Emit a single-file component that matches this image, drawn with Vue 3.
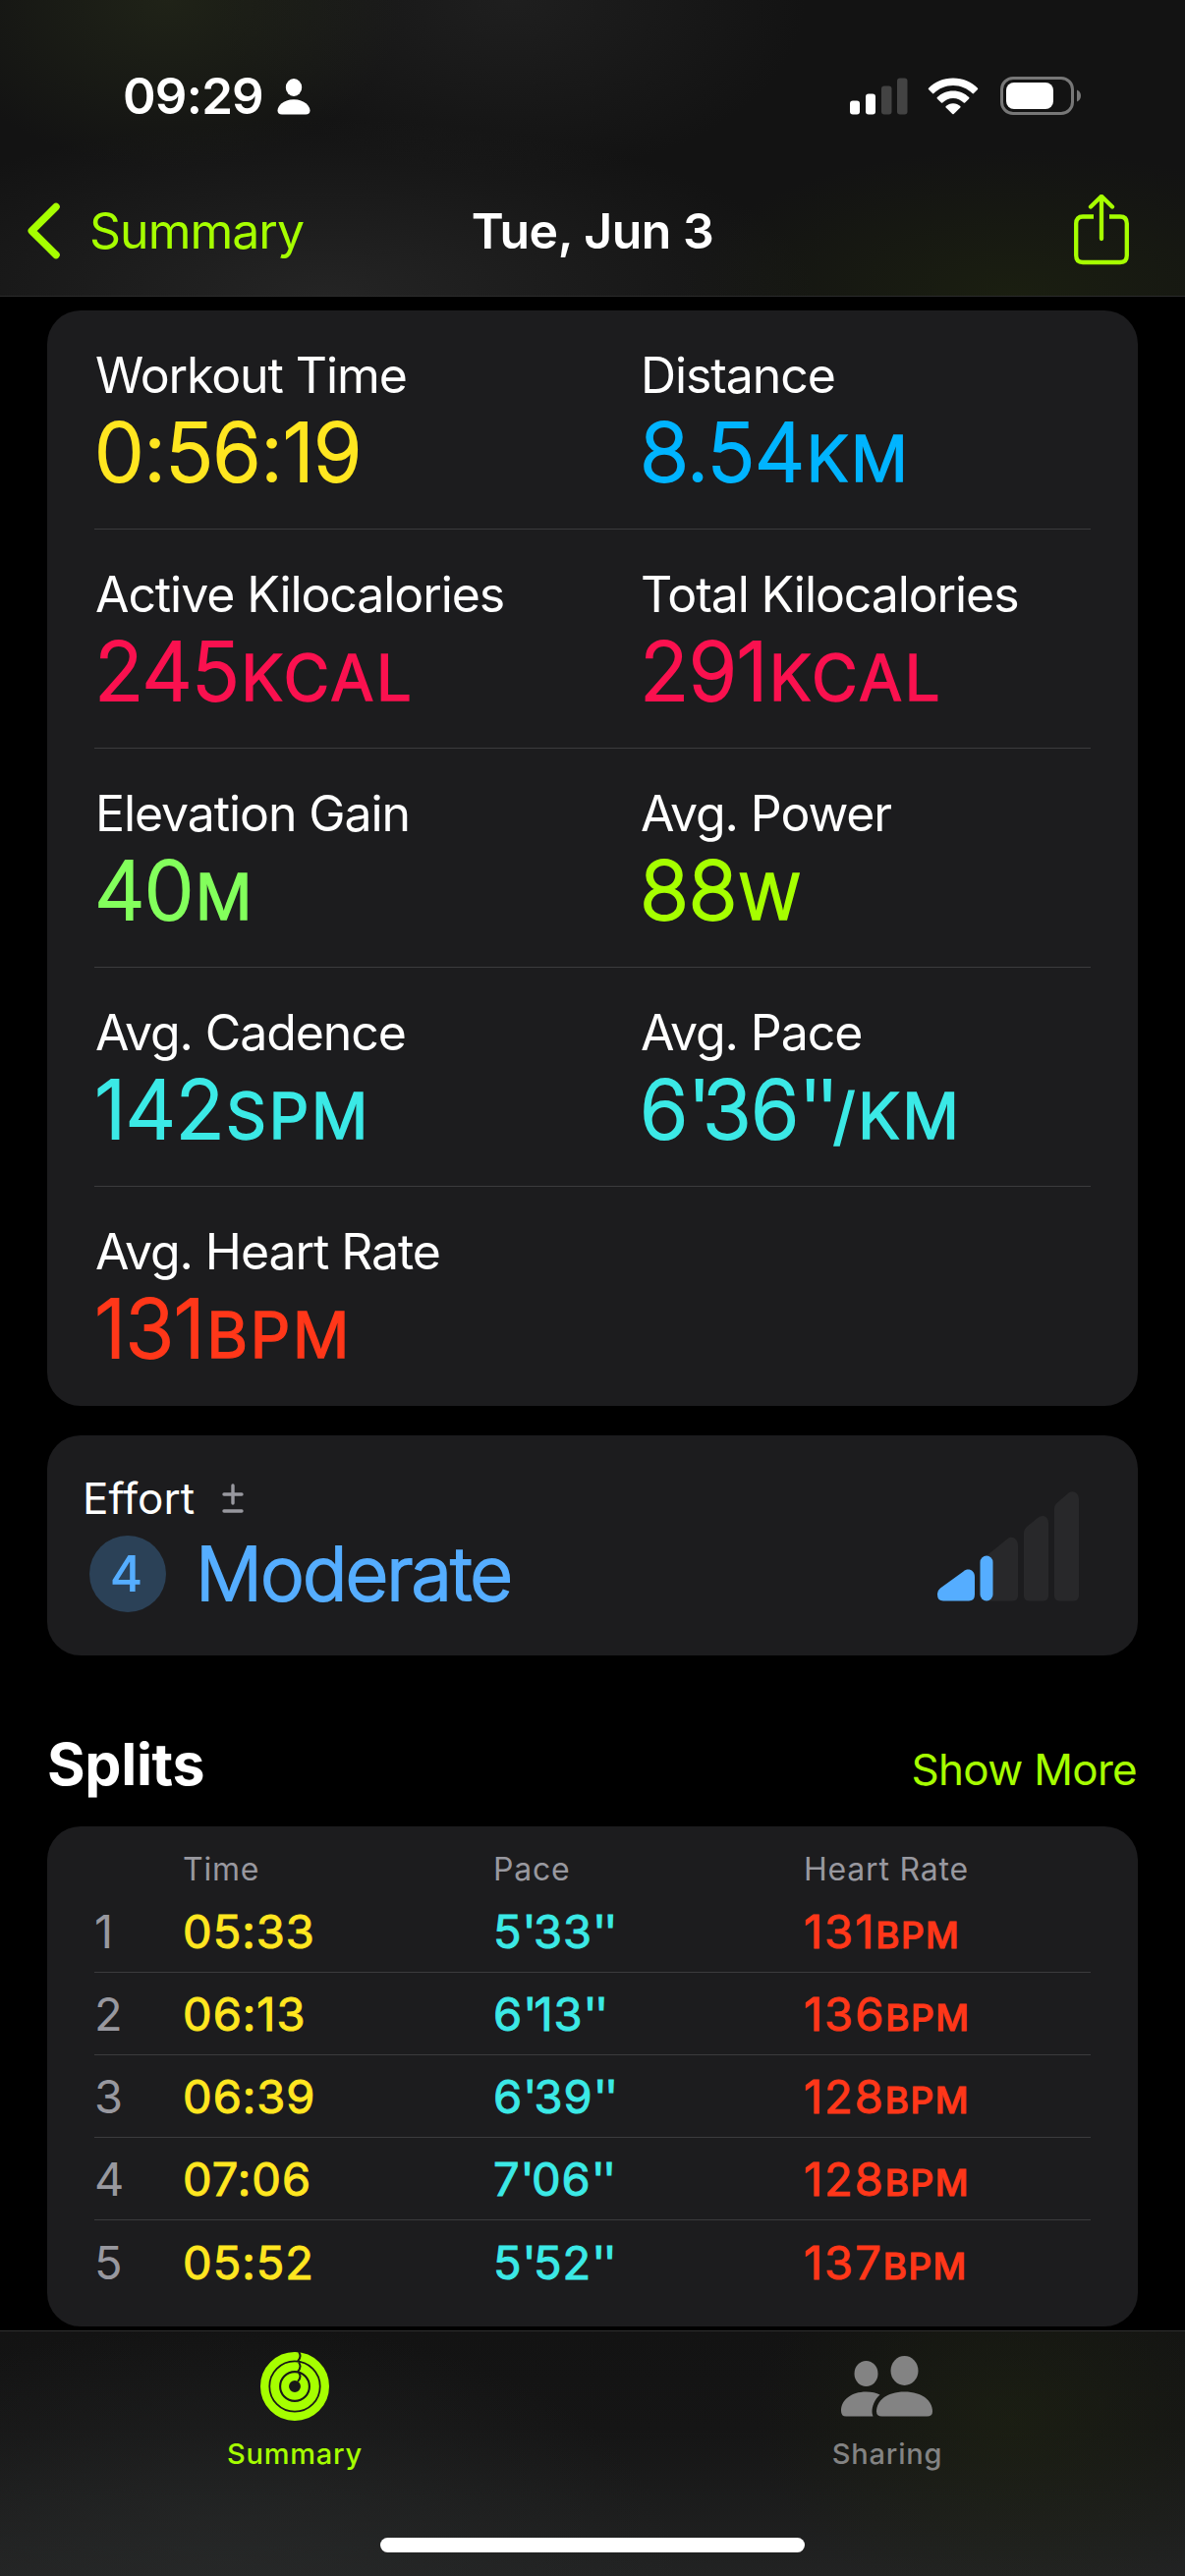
<script setup>
const metrics = [
  [
    { label: 'Workout Time', value: '0:56:19', unit: '', tone: 'yellow' },
    { label: 'Distance', value: '8.54', unit: 'KM', tone: 'blue' },
  ],
  [
    { label: 'Active Kilocalories', value: '245', unit: 'KCAL', tone: 'pink' },
    { label: 'Total Kilocalories', value: '291', unit: 'KCAL', tone: 'pink' },
  ],
  [
    { label: 'Elevation Gain', value: '40', unit: 'M', tone: 'green' },
    { label: 'Avg. Power', value: '88', unit: 'W', tone: 'lime' },
  ],
  [
    { label: 'Avg. Cadence', value: '142', unit: 'SPM', tone: 'cyan' },
    { label: 'Avg. Pace', value: "6'36''", unit: '/KM', tone: 'cyan' },
  ],
  [{ label: 'Avg. Heart Rate', value: '131', unit: 'BPM', tone: 'red' }],
]

const splits = [
  { time: '05:33', pace: "5'33''", bpm: 131 },
  { time: '06:13', pace: "6'13''", bpm: 136 },
  { time: '06:39', pace: "6'39''", bpm: 128 },
  { time: '07:06', pace: "7'06''", bpm: 128 },
  { time: '05:52', pace: "5'52''", bpm: 137 },
]

// Minute and second marks are set tighter than the digits around them.
const parts = (text) => text.split(/('+)/).filter(Boolean)
</script>

<template>
  <div class="screen">
    <header class="top">
      <div class="status">
        <span class="clock">09:29</span>
        <svg class="person" width="34" height="37" viewBox="0 0 34 37" fill="#fff">
          <ellipse cx="17" cy="9" rx="8.2" ry="9" />
          <path d="M5 36.500C2 36.500.5 35 .5 32.500C.5 28 6 21.200 17 21.200S33.500 28 33.500 32.500C33.500 35 32 36.500 29 36.500Z" />
        </svg>
        <span class="grow"></span>
        <svg class="signal" width="59" height="38" viewBox="0 0 59 38">
          <rect x="0" y="23.500" width="10" height="14" rx="3" fill="#fff" />
          <rect x="16" y="16.500" width="10" height="21" rx="3" fill="#fff" />
          <rect x="32" y="8.500" width="10.500" height="29" rx="3" fill="#434343" />
          <rect x="48" y="0.500" width="10.500" height="37" rx="3" fill="#434343" />
        </svg>
        <svg class="wifi" width="52" height="38" viewBox="0 0 52 38" fill="#fff">
          <path d="M26 .5C36 .5 45 4.500 51 10.700Q51.600 11.400 51 12.100L47 16.100Q46.300 16.700 45.600 16C40.500 11 33.600 8 26 8S11.500 11 6.400 16Q5.700 16.700 5 16.100L1 12.100Q.4 11.400 1 10.700C7 4.500 16 .5 26 .5Z" />
          <path d="M26 13.400C32.500 13.400 38 15.900 42.200 20Q42.800 20.700 42.200 21.400L38.100 25.500Q37.400 26.100 36.700 25.500C33.900 22.800 30.200 21 26 21S18.100 22.800 15.300 25.500Q14.600 26.100 13.900 25.500L9.800 21.400Q9.200 20.700 9.800 20C14 15.900 19.500 13.400 26 13.400Z" />
          <path d="M26 26.200C28.900 26.200 31.400 27.300 33.300 29.100Q33.900 29.800 33.300 30.500L26.700 37Q26 37.600 25.300 37L18.700 30.500Q18.100 29.800 18.700 29.100C20.600 27.300 23.100 26.200 26 26.200Z" />
        </svg>
        <svg class="battery" width="82" height="39" viewBox="0 0 82 39">
          <rect x="1.500" y="1.500" width="72" height="36" rx="11.500" fill="none" stroke="#777" stroke-width="3" />
          <rect x="6" y="6" width="48" height="27" rx="8" fill="#fff" />
          <path d="M78 13.500C80.500 14.500 82 16.800 82 19.500S80.500 24.500 78 25.500Z" fill="#777" />
        </svg>
      </div>
      <nav class="nav">
        <a class="back">
          <svg width="34" height="58" viewBox="0 0 34 58" fill="none" stroke="#a6ff00" stroke-width="7.500" stroke-linecap="round" stroke-linejoin="round">
            <path d="M29 4.500L4.300 29L29 53.500" />
          </svg>
          <span>Summary</span>
        </a>
        <h1 class="title">Tue, Jun 3</h1>
        <svg class="share" width="58" height="72" viewBox="0 0 58 72" fill="none" stroke="#a6ff00" stroke-width="4.300">
          <path d="M21 22.500H10Q3.200 22.500 3.200 29.500V62Q3.200 69 10 69H48Q54.800 69 54.800 62V29.500Q54.800 22.500 48 22.500H37" />
          <path d="M29 45V2.500M18 12.500L29 1.800L40 12.500" stroke-linecap="round" stroke-linejoin="round" />
        </svg>
      </nav>
    </header>

    <main class="content">
      <section class="card metrics">
        <div v-for="(row, i) in metrics" :key="i" class="metric-row">
          <div v-for="m in row" :key="m.label" class="metric">
            <div class="label">{{ m.label }}</div>
            <div class="value rounded" :class="m.tone"><span v-for="(p, k) in parts(m.value)" :key="k" :class="{ mark: p[0] === '\'' }">{{ p }}</span><span v-if="m.unit" class="unit">{{ m.unit }}</span></div>
          </div>
        </div>
      </section>

      <section class="card effort">
        <div class="effort-info">
          <div class="effort-head">
            <span>Effort</span>
            <svg width="22" height="31" viewBox="0 0 22 31" fill="none" stroke="#98989f" stroke-width="3.400" stroke-linecap="round">
              <path d="M2 11H20M11 2V20M2 28H20" />
            </svg>
          </div>
          <div class="effort-level">
            <span class="badge">4</span>
            <span class="level rounded">Moderate</span>
          </div>
        </div>
        <svg class="bars" width="144" height="112" viewBox="0 0 144 112">
          <path fill="#28282a" d="M119 18Q119 14 122 11.500L132.500 2.500C137 -2 144 1 144 8V106Q144 111.500 138 111.500H125Q119 111.500 119 106Z" />
          <path fill="#28282a" d="M88 43Q88 38.500 91 36L101.500 27.500C106 22.500 113 25 113 32V106Q113 111.500 107 111.500H94Q88 111.500 88 106Z" />
          <path fill="#28282a" d="M48 67L71 48.500C75.500 44.500 82 48 82 55V106Q82 111.500 76 111.500H50Z" />
          <path fill="#55adff" d="M0 104Q0 101 3 98.500L26.500 81.500C31 77.500 38 80 38 87V105Q38 111.500 32 111.500H6Q0 111.500 0 105Z" />
          <rect x="43.500" y="65.500" width="13" height="46" rx="6.500" fill="#55adff" />
        </svg>
      </section>

      <div class="section-head">
        <h2>Splits</h2>
        <a>Show More</a>
      </div>

      <section class="card splits">
        <div class="split head">
          <span></span><span>Time</span><span>Pace</span><span>Heart Rate</span>
        </div>
        <div v-for="(s, i) in splits" :key="i" class="split row">
          <span class="index">{{ i + 1 }}</span>
          <span class="figure yellow">{{ s.time }}</span>
          <span class="figure cyan"><span v-for="(p, k) in parts(s.pace)" :key="k" :class="{ mark: p[0] === '\'' }">{{ p }}</span></span>
          <span class="figure red">{{ s.bpm }}<span class="unit">BPM</span></span>
        </div>
      </section>
    </main>

    <footer class="tabbar">
      <div class="tabs">
        <a class="tab active">
          <svg width="70" height="70" viewBox="0 0 70 70" fill="none">
            <circle cx="35" cy="35" r="30.800" stroke="#a6ff00" stroke-width="8.400" />
            <circle cx="35" cy="35" r="20.400" stroke="#a6ff00" stroke-width="8.900" />
            <circle cx="35" cy="35" r="9.900" stroke="#a6ff00" stroke-width="7.900" />
            <path stroke="#1a1b1a" stroke-width="2" d="M39 0Q42.500 4.500 38 9.500M39 10.500Q42.500 15 38 20M39 21Q42.500 25 38 30" />
          </svg>
          <span>Summary</span>
        </a>
        <a class="tab">
          <svg width="94" height="70" viewBox="0 0 94 70" fill="#838383">
            <ellipse cx="25.500" cy="22" rx="12" ry="13" />
            <ellipse cx="64.500" cy="19" rx="14" ry="15" />
            <path d="M0 60C0 49 10 40.500 25.500 40.500Q34 40.500 39.500 43.500C34 48.500 31.500 55 31.500 61Q31.500 63.500 32.500 65.500H5Q0 65.500 0 60Z" />
            <path d="M36 60.500C36 50 46 40.500 64.500 40.500S93 50 93 60.500Q93 65.500 87.500 65.500H41.500Q36 65.500 36 60.500Z" />
          </svg>
          <span>Sharing</span>
        </a>
      </div>
      <div class="home-indicator"></div>
    </footer>
  </div>
</template>

<style>
html,
body {
  margin: 0;
  background: #000;
}
</style>

<style scoped>
.screen {
  width: 1206px;
  height: 2622px;
  display: flex;
  flex-direction: column;
  overflow: hidden;
  background: #000;
  color: #fff;
  font-family: Inter, "Liberation Sans", sans-serif;
}
.top {
  box-sizing: border-box;
  height: 302px;
  flex: none;
  border-bottom: 1px solid #2b2b2b;
  background:
    radial-gradient(ellipse 240px 170px at 170px 0, rgba(50, 58, 30, 0.4), transparent),
    radial-gradient(ellipse 340px 150px at 1030px 302px, rgba(34, 42, 14, 0.5), transparent),
    radial-gradient(ellipse 500px 180px at 330px 302px, rgba(48, 48, 48, 0.6), transparent),
    radial-gradient(ellipse 300px 180px at 520px 0, rgba(42, 42, 42, 0.5), transparent),
    #131313;
}
.status {
  display: flex;
  height: 158px;
  box-sizing: border-box;
  padding: 79px 106px 0 125px;
  align-items: flex-start;
}
.clock {
  font-size: 51px;
  font-weight: 600;
  line-height: 38px;
  letter-spacing: -0.8px;
}
.person {
  margin: 1px 0 0 14px;
}
.grow {
  flex: 1;
}
.wifi {
  margin-left: 20px;
}
.battery {
  margin-left: 22px;
  margin-top: -1px;
}
.nav {
  display: grid;
  grid-template-columns: minmax(0, 1fr) auto minmax(0, 1fr);
  align-items: center;
  height: 143px;
  padding: 0 28px;
  box-sizing: border-box;
  margin-top: -1px;
}
.back {
  display: flex;
  align-items: center;
  gap: 29px;
  color: #a6ff00;
  font-size: 50px;
  line-height: 58px;
  letter-spacing: -1px;
  padding-top: 13px;
}
.title {
  margin: 13px 0 0;
  font-size: 50px;
  line-height: 58px;
  font-weight: 600;
  letter-spacing: -0.5px;
}
.share {
  justify-self: end;
  margin: 11px 28px 0 0;
}
.content {
  flex: none;
  height: 2070px;
  box-sizing: border-box;
  padding: 14px 48px 0;
}
.card {
  background: #1c1c1e;
  border-radius: 34px;
  box-sizing: border-box;
}
.metrics {
  height: 1115px;
  padding: 0 48px;
}
.metric-row {
  display: grid;
  grid-template-columns: 555px 1fr;
  height: 223px;
  box-sizing: border-box;
  border-bottom: 1px solid #3b3b3d;
  padding-top: 36px;
}
.metric-row:last-child {
  border-bottom: 0;
}
.label {
  font-size: 50px;
  line-height: 60px;
  letter-spacing: -1.1px;
  padding-left: 1px;
}
.value {
  margin-top: 4px;
  font-size: 82px;
  line-height: 90px;
  letter-spacing: -0.7px;
}
.value .unit {
  margin-left: 2px;
  font-size: 64px;
  font-weight: 400;
  -webkit-text-stroke-width: 1.4px;
  letter-spacing: 2.4px;
}
.value .mark {
  letter-spacing: -6.500px;
  margin-right: -2px;
}
.value .mark:first-of-type {
  margin-right: 0;
}
.rounded {
  font-weight: 300;
  -webkit-text-stroke: 2px currentColor;
  stroke-linejoin: round;
  paint-order: stroke fill;
}
.yellow { color: #ffe620; }
.blue { color: #00b4ff; }
.pink { color: #fa114f; }
.green { color: #83ff5c; }
.lime { color: #a6ff00; }
.cyan { color: #3be9e6; }
.red { color: #ff3719; }
.effort {
  display: flex;
  justify-content: space-between;
  height: 224px;
  margin-top: 30px;
  padding: 37px 60px 0 36px;
}
.effort-head {
  display: flex;
  align-items: center;
  gap: 28px;
  font-size: 44px;
  line-height: 54px;
}
.effort-level {
  display: flex;
  align-items: center;
  margin: 11px 0 0 7px;
}
.badge {
  width: 78px;
  height: 78px;
  border-radius: 50%;
  background: #2b4157;
  color: #55adff;
  font-size: 51px;
  font-weight: 500;
  line-height: 78px;
  text-align: center;
  text-indent: -3px;
}
.level {
  margin-left: 30px;
  font-size: 75.500px;
  line-height: 78px;
  letter-spacing: -1.9px;
  color: #55adff;
}
.bars {
  margin-top: 20px;
}
.section-head {
  display: flex;
  justify-content: space-between;
  align-items: baseline;
  height: 174px;
  box-sizing: border-box;
  padding: 75px 1px 0 0;
}
.section-head h2 {
  margin: 0;
  font-size: 59px;
  line-height: 72px;
  font-weight: 700;
  letter-spacing: -0.3px;
}
.section-head a {
  font-size: 44px;
  letter-spacing: -0.7px;
  color: #a6ff00;
}
.splits {
  height: 509px;
  padding: 24px 48px 0;
}
.split {
  display: grid;
  grid-template-columns: 90px 316px 316px 1fr;
  align-items: center;
}
.split.head {
  height: 41px;
  box-sizing: border-box;
  padding-bottom: 2px;
  color: #98989f;
  font-size: 32px;
  letter-spacing: 0.8px;
}
.split.row {
  height: 84px;
  box-sizing: border-box;
  border-bottom: 1px solid #3b3b3d;
  font-size: 47px;
}
.split.row:last-child {
  border-bottom: 0;
}
.split .index {
  color: #98989f;
}
.split .figure {
  letter-spacing: 1px;
  -webkit-text-stroke: 1px currentColor;
}
.split .figure.red {
  letter-spacing: 2px;
}
.split .mark {
  letter-spacing: -2.8px;
}
.split .unit {
  font-size: 37px;
  font-weight: 500;
  letter-spacing: 1.4px;
}
.tabbar {
  flex: none;
  height: 250px;
  box-sizing: border-box;
  border-top: 1px solid #2f2f2f;
  display: flex;
  flex-direction: column;
  align-items: center;
  background:
    radial-gradient(ellipse 260px 200px at 1030px 90px, rgba(32, 38, 16, 0.5), transparent),
    radial-gradient(ellipse 460px 260px at 230px 250px, rgba(40, 42, 42, 0.7), transparent),
    linear-gradient(#131313, #151515 40%, #222323);
}
.tabs {
  display: grid;
  grid-template-columns: 600px 606px;
  width: 1206px;
  height: 210px;
}
.tab {
  display: flex;
  flex-direction: column;
  align-items: center;
  padding-top: 21px;
  color: #838383;
  font-size: 29px;
  font-weight: 500;
  letter-spacing: 0.8px;
}
.tab span {
  margin-top: 15px;
  line-height: 38px;
}
.tab.active {
  color: #a6ff00;
}
.home-indicator {
  width: 432px;
  height: 15px;
  border-radius: 8px;
  background: #fff;
}
</style>
